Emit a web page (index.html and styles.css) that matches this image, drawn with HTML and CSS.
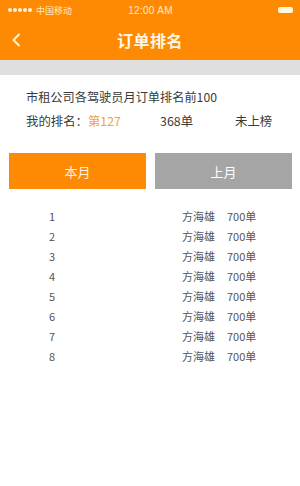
FILE: index.html
```html
<!DOCTYPE html>
<html lang="zh">
<head>
<meta charset="utf-8">
<link rel="stylesheet" href="styles.css">
</head>
<body>
<div class="app">
  <header class="top">
    <div class="status">
      <div class="carrier">
        <span class="dots"><i></i><i></i><i></i><i></i><i></i></span>
        <span>中国移动</span>
      </div>
      <div class="time">12:00 AM</div>
      <div class="battery"><span></span></div>
    </div>
    <div class="nav">
      <svg class="back" width="10" height="14" viewBox="0 0 10 14"><path d="M8 1.5 L2.5 7 L8 12.5" fill="none" stroke="#fff3c8" stroke-width="2" stroke-linecap="round" stroke-linejoin="round"/></svg>
      <h1 class="title">订单排名</h1>
    </div>
  </header>
  <div class="band"></div>
  <section class="summary">
    <p class="headline">市租公司各驾驶员月订单排名前100</p>
    <div class="mine">
      <span class="mine-label">我的排名：<em>第127</em></span>
      <span class="mine-count">368单</span>
      <span class="mine-status">未上榜</span>
    </div>
  </section>
  <div class="tabs">
    <button class="tab active">本月</button>
    <button class="tab">上月</button>
  </div>
  <ul class="list">
    <li><span class="rank">1</span><span class="name">方海雄</span><span class="count">700单</span></li>
    <li><span class="rank">2</span><span class="name">方海雄</span><span class="count">700单</span></li>
    <li><span class="rank">3</span><span class="name">方海雄</span><span class="count">700单</span></li>
    <li><span class="rank">4</span><span class="name">方海雄</span><span class="count">700单</span></li>
    <li><span class="rank">5</span><span class="name">方海雄</span><span class="count">700单</span></li>
    <li><span class="rank">6</span><span class="name">方海雄</span><span class="count">700单</span></li>
    <li><span class="rank">7</span><span class="name">方海雄</span><span class="count">700单</span></li>
    <li><span class="rank">8</span><span class="name">方海雄</span><span class="count">700单</span></li>
  </ul>
</div>
</body>
</html>
```

FILE: styles.css
```css
* { box-sizing: border-box; }
html, body { margin: 0; padding: 0; background: #fff; }
body {
  font-family: "Noto Sans CJK SC", "Noto Sans", sans-serif;
  color: #333;
  width: 300px;
  height: 486px;
  overflow: hidden;
}
.top { background: #fe8a03; color: #fff; }
.status {
  height: 20px;
  display: flex;
  align-items: center;
  justify-content: space-between;
  padding: 0 7px 0 8px;
  font-size: 9px;
  color: #ffe9c4;
  position: relative;
}
.carrier { display: flex; align-items: center; gap: 4px; width: 90px; }
.dots { display: flex; gap: 1px; }
.dots i { width: 4px; height: 4px; border-radius: 50%; background: #fff3d9; display: block; }
.time { font-family: "Liberation Sans", sans-serif; font-size: 10px; letter-spacing: 0.3px; }
.battery {
  width: 90px;
  display: flex;
  justify-content: flex-end;
}
.battery span {
  display: block;
  width: 15px;
  height: 6px;
  border-radius: 2px;
  background: #fff6dc;
}
.nav {
  height: 40px;
  display: flex;
  align-items: center;
  justify-content: center;
  position: relative;
}
.back { position: absolute; left: 11px; top: 13px; }
.title {
  margin: 0;
  font-size: 16px;
  font-weight: 700;
  color: #fff6e6;
  letter-spacing: 0.5px;
}
.band { height: 15px; background: #e0dfe0; }
.summary { padding: 12px 0 0 26px; }
.headline { margin: 0; font-size: 12.2px; line-height: 20px; color: #3a3a3a; }
.mine { display: flex; font-size: 12.4px; line-height: 20px; margin-top: 4px; color: #3a3a3a; }
.mine-label { width: 134px; }
.mine-label em { font-style: normal; color: #f8a130; }
.mine-count { width: 75px; }
.tabs {
  display: flex;
  gap: 9px;
  padding: 0 8px 0 9px;
  margin-top: 22px;
}
.tab {
  flex: 1;
  height: 36px;
  border: 0;
  padding: 0;
  font-family: inherit;
  font-size: 13px;
  color: #fff;
  background: #a5a5a5;
}
.tab.active { background: #fe8a03; color: #fff2dc; }
.list { list-style: none; margin: 17px 0 0; padding: 0; }
.list li {
  display: flex;
  height: 20px;
  align-items: center;
  font-size: 11px;
  color: #555;
}
.rank { width: 182px; padding-left: 49px; }
.name { width: 45px; }
```
